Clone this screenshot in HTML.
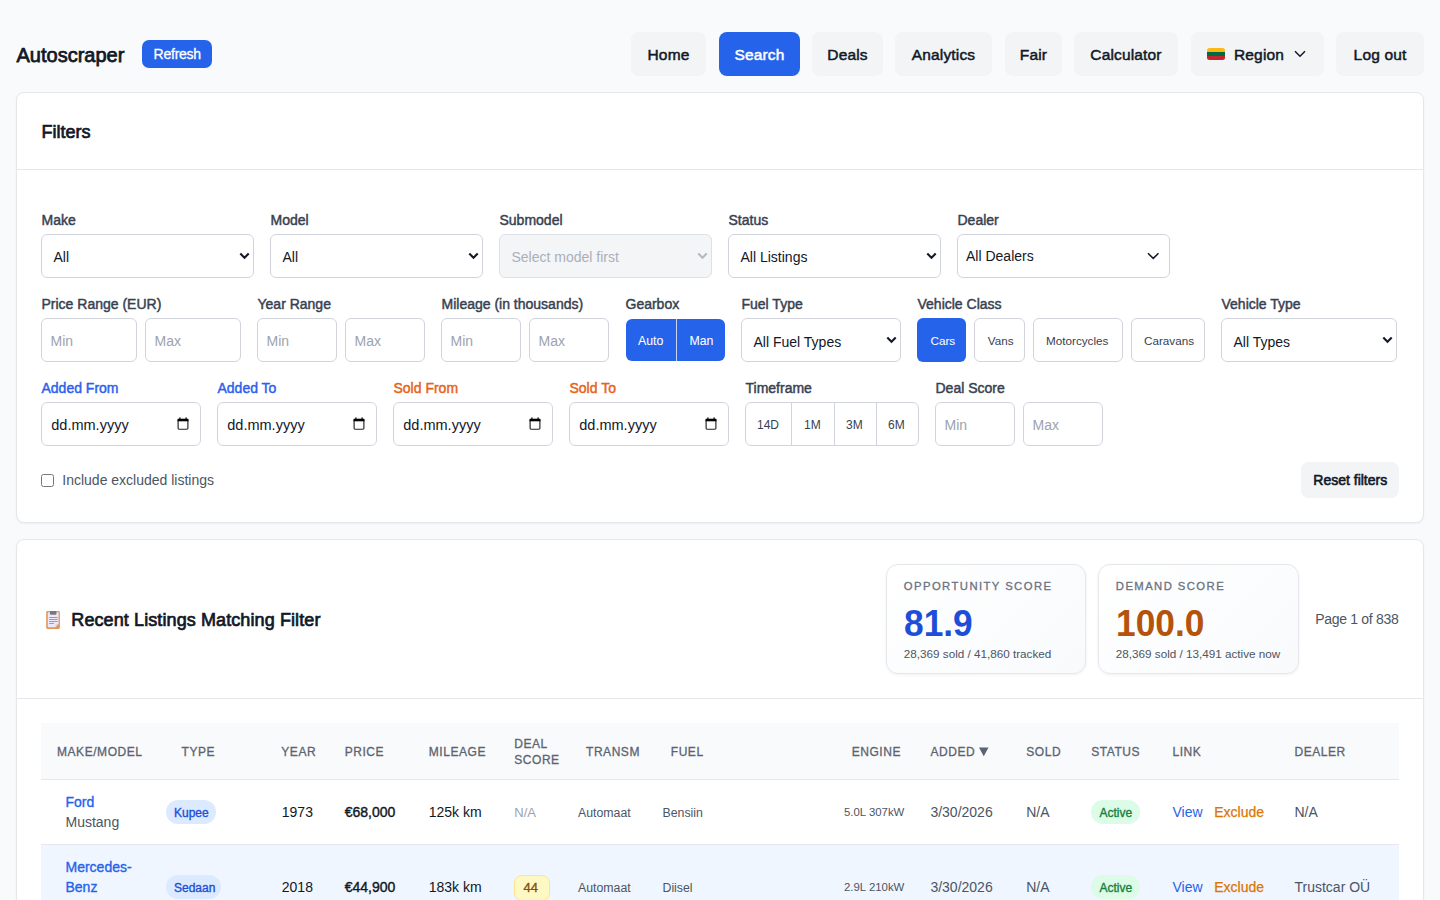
<!DOCTYPE html>
<html><head><meta charset="utf-8"><title>Autoscraper</title>
<style>
*{box-sizing:border-box;margin:0;padding:0}
html,body{width:1440px;height:900px;overflow:hidden}
body{background:#f8fafc;font-family:"Liberation Sans",sans-serif;color:#111827;position:relative}
.a{position:absolute;white-space:nowrap;line-height:1}
</style></head><body>
<div class="a" style="left:16.5px;top:44.77px;font-size:20px;color:#111827;-webkit-text-stroke-width:0.75px">Autoscraper</div>
<div style="position:absolute;left:142px;top:40px;width:70px;height:28px;background:#2563eb;border-radius:7px"></div>
<div class="a" style="left:153.6px;top:47.05px;font-size:14px;color:#ffffff;-webkit-text-stroke-width:0.3px;letter-spacing:-0.25px">Refresh</div>
<div style="position:absolute;left:631px;top:32px;width:75px;height:44px;background:#f3f4f6;border-radius:8px"></div>
<div class="a" style="left:631px;top:46.98px;width:75px;text-align:center;font-size:15.5px;letter-spacing:0.15px;color:#111827;-webkit-text-stroke-width:0.5px">Home</div>
<div style="position:absolute;left:719px;top:32px;width:81px;height:44px;background:#2563eb;border-radius:8px"></div>
<div class="a" style="left:719px;top:46.98px;width:81px;text-align:center;font-size:15.5px;letter-spacing:0.15px;color:#fff;-webkit-text-stroke-width:0.5px">Search</div>
<div style="position:absolute;left:812px;top:32px;width:71px;height:44px;background:#f3f4f6;border-radius:8px"></div>
<div class="a" style="left:812px;top:46.98px;width:71px;text-align:center;font-size:15.5px;letter-spacing:0.15px;color:#111827;-webkit-text-stroke-width:0.5px">Deals</div>
<div style="position:absolute;left:895px;top:32px;width:97px;height:44px;background:#f3f4f6;border-radius:8px"></div>
<div class="a" style="left:895px;top:46.98px;width:97px;text-align:center;font-size:15.5px;letter-spacing:0.15px;color:#111827;-webkit-text-stroke-width:0.5px">Analytics</div>
<div style="position:absolute;left:1005px;top:32px;width:57px;height:44px;background:#f3f4f6;border-radius:8px"></div>
<div class="a" style="left:1005px;top:46.98px;width:57px;text-align:center;font-size:15.5px;letter-spacing:0.15px;color:#111827;-webkit-text-stroke-width:0.5px">Fair</div>
<div style="position:absolute;left:1074px;top:32px;width:104px;height:44px;background:#f3f4f6;border-radius:8px"></div>
<div class="a" style="left:1074px;top:46.98px;width:104px;text-align:center;font-size:15.5px;letter-spacing:0.15px;color:#111827;-webkit-text-stroke-width:0.5px">Calculator</div>
<div style="position:absolute;left:1336px;top:32px;width:88px;height:44px;background:#f3f4f6;border-radius:8px"></div>
<div class="a" style="left:1336px;top:46.98px;width:88px;text-align:center;font-size:15.5px;letter-spacing:0.15px;color:#111827;-webkit-text-stroke-width:0.5px">Log out</div>
<div style="position:absolute;left:1191px;top:32px;width:133px;height:44px;background:#f3f4f6;border-radius:8px"></div>
<div style="position:absolute;left:1206.5px;top:48px;width:18.5px;height:12px;border-radius:2.5px;overflow:hidden"><div style="height:4px;background:#fdb913"></div><div style="height:4px;background:#006a44"></div><div style="height:4px;background:#c1272d"></div></div>
<div class="a" style="left:1234px;top:46.98px;font-size:15.5px;color:#111827;-webkit-text-stroke-width:0.5px;letter-spacing:0.15px">Region</div>
<svg style="position:absolute;left:1294px;top:50px" width="12" height="8" viewBox="0 0 12 8"><path d="M1 1.3 L6 6.3 L11 1.3" fill="none" stroke="#111827" stroke-width="1.5"/></svg>
<div style="position:absolute;left:16px;top:92px;width:1408px;height:431px;background:#fff;border:1px solid #e5e7eb;border-radius:8px;box-shadow:0 1px 2px rgba(16,24,40,.05)"></div>
<div class="a" style="left:41.5px;top:123.06px;font-size:18px;color:#111827;-webkit-text-stroke-width:0.7px">Filters</div>
<div style="position:absolute;left:17px;top:169px;width:1406px;height:1px;background:#e5e7eb"></div>
<div class="a" style="left:41.5px;top:213.15px;font-size:14px;color:#374151;-webkit-text-stroke-width:0.45px">Make</div>
<div style="position:absolute;left:41px;top:234px;width:213px;height:44px;background:#fff;border:1px solid #d1d5db;border-radius:6px"></div>
<div class="a" style="left:53.5px;top:250.15px;font-size:14px;color:#111827">All</div>
<svg style="position:absolute;left:239px;top:251.7px" width="11" height="8" viewBox="0 0 11 8"><path d="M1.3 1.6 L5.5 5.8 L9.7 1.6" fill="none" stroke="#111827" stroke-width="2.1"/></svg>
<div class="a" style="left:270.5px;top:213.15px;font-size:14px;color:#374151;-webkit-text-stroke-width:0.45px">Model</div>
<div style="position:absolute;left:270px;top:234px;width:213px;height:44px;background:#fff;border:1px solid #d1d5db;border-radius:6px"></div>
<div class="a" style="left:282.5px;top:250.15px;font-size:14px;color:#111827">All</div>
<svg style="position:absolute;left:468px;top:251.7px" width="11" height="8" viewBox="0 0 11 8"><path d="M1.3 1.6 L5.5 5.8 L9.7 1.6" fill="none" stroke="#111827" stroke-width="2.1"/></svg>
<div class="a" style="left:499.5px;top:213.15px;font-size:14px;color:#374151;-webkit-text-stroke-width:0.45px">Submodel</div>
<div style="position:absolute;left:499px;top:234px;width:213px;height:44px;background:#f4f5f7;border:1px solid #dde0e6;border-radius:6px"></div>
<div class="a" style="left:511.5px;top:250.15px;font-size:14px;color:#aab0bb">Select model first</div>
<svg style="position:absolute;left:697px;top:251.7px" width="11" height="8" viewBox="0 0 11 8"><path d="M1.3 1.6 L5.5 5.8 L9.7 1.6" fill="none" stroke="#b3b9c3" stroke-width="2.1"/></svg>
<div class="a" style="left:728.5px;top:213.15px;font-size:14px;color:#374151;-webkit-text-stroke-width:0.45px">Status</div>
<div style="position:absolute;left:728px;top:234px;width:213px;height:44px;background:#fff;border:1px solid #d1d5db;border-radius:6px"></div>
<div class="a" style="left:740.5px;top:250.15px;font-size:14px;color:#111827">All Listings</div>
<svg style="position:absolute;left:926px;top:251.7px" width="11" height="8" viewBox="0 0 11 8"><path d="M1.3 1.6 L5.5 5.8 L9.7 1.6" fill="none" stroke="#111827" stroke-width="2.1"/></svg>
<div class="a" style="left:957.5px;top:213.15px;font-size:14px;color:#374151;-webkit-text-stroke-width:0.45px">Dealer</div>
<div style="position:absolute;left:957px;top:234px;width:213px;height:44px;background:#fff;border:1px solid #d1d5db;border-radius:6px"></div>
<div class="a" style="left:966px;top:248.95px;font-size:14px;color:#111827">All Dealers</div>
<svg style="position:absolute;left:1146.5px;top:251.5px" width="12.5" height="8" viewBox="0 0 12.5 8"><path d="M1 1.3 L6.25 6.4 L11.5 1.3" fill="none" stroke="#111827" stroke-width="1.5"/></svg>
<div class="a" style="left:41.5px;top:297.05px;font-size:14px;color:#374151;-webkit-text-stroke-width:0.45px">Price Range (EUR)</div>
<div style="position:absolute;left:41px;top:318px;width:96px;height:44px;background:#fff;border:1px solid #d1d5db;border-radius:6px"></div>
<div class="a" style="left:50.5px;top:334.15px;font-size:14px;color:#9ca3af">Min</div>
<div style="position:absolute;left:145px;top:318px;width:96px;height:44px;background:#fff;border:1px solid #d1d5db;border-radius:6px"></div>
<div class="a" style="left:154.5px;top:334.15px;font-size:14px;color:#9ca3af">Max</div>
<div class="a" style="left:257.5px;top:297.05px;font-size:14px;color:#374151;-webkit-text-stroke-width:0.45px">Year Range</div>
<div style="position:absolute;left:257px;top:318px;width:80px;height:44px;background:#fff;border:1px solid #d1d5db;border-radius:6px"></div>
<div class="a" style="left:266.5px;top:334.15px;font-size:14px;color:#9ca3af">Min</div>
<div style="position:absolute;left:345px;top:318px;width:80px;height:44px;background:#fff;border:1px solid #d1d5db;border-radius:6px"></div>
<div class="a" style="left:354.5px;top:334.15px;font-size:14px;color:#9ca3af">Max</div>
<div class="a" style="left:441.5px;top:297.05px;font-size:14px;color:#374151;-webkit-text-stroke-width:0.45px">Mileage (in thousands)</div>
<div style="position:absolute;left:441px;top:318px;width:80px;height:44px;background:#fff;border:1px solid #d1d5db;border-radius:6px"></div>
<div class="a" style="left:450.5px;top:334.15px;font-size:14px;color:#9ca3af">Min</div>
<div style="position:absolute;left:529px;top:318px;width:80px;height:44px;background:#fff;border:1px solid #d1d5db;border-radius:6px"></div>
<div class="a" style="left:538.5px;top:334.15px;font-size:14px;color:#9ca3af">Max</div>
<div class="a" style="left:625.5px;top:297.05px;font-size:14px;color:#374151;-webkit-text-stroke-width:0.45px">Gearbox</div>
<div style="position:absolute;left:625.5px;top:318.6px;width:99px;height:42.4px;background:#2563eb;border-radius:6px"></div>
<div style="position:absolute;left:676px;top:318.6px;width:1px;height:42.4px;background:#c9d6f2"></div>
<div class="a" style="left:638px;top:335.09px;font-size:12.3px;color:#fff;-webkit-text-stroke-width:0.05px">Auto</div>
<div class="a" style="left:689.5px;top:335.09px;font-size:12.3px;color:#fff;-webkit-text-stroke-width:0.05px">Man</div>
<div class="a" style="left:741.5px;top:297.05px;font-size:14px;color:#374151;-webkit-text-stroke-width:0.45px">Fuel Type</div>
<div style="position:absolute;left:741px;top:318px;width:160px;height:44px;background:#fff;border:1px solid #d1d5db;border-radius:6px"></div>
<div class="a" style="left:753.5px;top:334.65px;font-size:14px;color:#111827">All Fuel Types</div>
<svg style="position:absolute;left:886px;top:335.7px" width="11" height="8" viewBox="0 0 11 8"><path d="M1.3 1.6 L5.5 5.8 L9.7 1.6" fill="none" stroke="#111827" stroke-width="2.1"/></svg>
<div class="a" style="left:917.5px;top:297.05px;font-size:14px;color:#374151;-webkit-text-stroke-width:0.45px">Vehicle Class</div>
<div style="position:absolute;left:917px;top:318px;width:49px;height:44px;background:#2563eb;border-radius:6px"></div>
<div class="a" style="left:930.5px;top:335.10px;font-size:11.7px;color:#fff;-webkit-text-stroke-width:0.05px">Cars</div>
<div style="position:absolute;left:974px;top:318px;width:51px;height:44px;background:#fff;border:1px solid #d1d5db;border-radius:6px"></div>
<div class="a" style="left:987.8px;top:335.10px;font-size:11.7px;color:#374151">Vans</div>
<div style="position:absolute;left:1033px;top:318px;width:90px;height:44px;background:#fff;border:1px solid #d1d5db;border-radius:6px"></div>
<div class="a" style="left:1046px;top:335.10px;font-size:11.7px;color:#374151">Motorcycles</div>
<div style="position:absolute;left:1131px;top:318px;width:74px;height:44px;background:#fff;border:1px solid #d1d5db;border-radius:6px"></div>
<div class="a" style="left:1144px;top:335.10px;font-size:11.7px;color:#374151">Caravans</div>
<div class="a" style="left:1221.5px;top:297.05px;font-size:14px;color:#374151;-webkit-text-stroke-width:0.45px">Vehicle Type</div>
<div style="position:absolute;left:1221px;top:318px;width:176px;height:44px;background:#fff;border:1px solid #d1d5db;border-radius:6px"></div>
<div class="a" style="left:1233.5px;top:334.65px;font-size:14px;color:#111827">All Types</div>
<svg style="position:absolute;left:1382px;top:335.7px" width="11" height="8" viewBox="0 0 11 8"><path d="M1.3 1.6 L5.5 5.8 L9.7 1.6" fill="none" stroke="#111827" stroke-width="2.1"/></svg>
<div class="a" style="left:41.5px;top:381.25px;font-size:14px;color:#2c5fee;-webkit-text-stroke-width:0.45px">Added From</div>
<div style="position:absolute;left:41px;top:402px;width:160px;height:44px;background:#fff;border:1px solid #d1d5db;border-radius:6px"></div>
<div class="a" style="left:51.3px;top:417.73px;font-size:14.5px;color:#111827">dd.mm.yyyy</div>
<svg style="position:absolute;left:177px;top:417px" width="12" height="13" viewBox="0 0 12 13"><rect x="1.1" y="2.4" width="9.8" height="9.8" rx="0.9" fill="none" stroke="#222" stroke-width="1.15"/><rect x="0.6" y="1.9" width="10.8" height="2.4" fill="#000"/><rect x="2.3" y="0.4" width="1.2" height="2" fill="#000"/><rect x="8.5" y="0.4" width="1.2" height="2" fill="#000"/></svg>
<div class="a" style="left:217.5px;top:381.25px;font-size:14px;color:#2c5fee;-webkit-text-stroke-width:0.45px">Added To</div>
<div style="position:absolute;left:217px;top:402px;width:160px;height:44px;background:#fff;border:1px solid #d1d5db;border-radius:6px"></div>
<div class="a" style="left:227.3px;top:417.73px;font-size:14.5px;color:#111827">dd.mm.yyyy</div>
<svg style="position:absolute;left:353px;top:417px" width="12" height="13" viewBox="0 0 12 13"><rect x="1.1" y="2.4" width="9.8" height="9.8" rx="0.9" fill="none" stroke="#222" stroke-width="1.15"/><rect x="0.6" y="1.9" width="10.8" height="2.4" fill="#000"/><rect x="2.3" y="0.4" width="1.2" height="2" fill="#000"/><rect x="8.5" y="0.4" width="1.2" height="2" fill="#000"/></svg>
<div class="a" style="left:393.5px;top:381.25px;font-size:14px;color:#e8621a;-webkit-text-stroke-width:0.45px">Sold From</div>
<div style="position:absolute;left:393px;top:402px;width:160px;height:44px;background:#fff;border:1px solid #d1d5db;border-radius:6px"></div>
<div class="a" style="left:403.3px;top:417.73px;font-size:14.5px;color:#111827">dd.mm.yyyy</div>
<svg style="position:absolute;left:529px;top:417px" width="12" height="13" viewBox="0 0 12 13"><rect x="1.1" y="2.4" width="9.8" height="9.8" rx="0.9" fill="none" stroke="#222" stroke-width="1.15"/><rect x="0.6" y="1.9" width="10.8" height="2.4" fill="#000"/><rect x="2.3" y="0.4" width="1.2" height="2" fill="#000"/><rect x="8.5" y="0.4" width="1.2" height="2" fill="#000"/></svg>
<div class="a" style="left:569.5px;top:381.25px;font-size:14px;color:#e8621a;-webkit-text-stroke-width:0.45px">Sold To</div>
<div style="position:absolute;left:569px;top:402px;width:160px;height:44px;background:#fff;border:1px solid #d1d5db;border-radius:6px"></div>
<div class="a" style="left:579.3px;top:417.73px;font-size:14.5px;color:#111827">dd.mm.yyyy</div>
<svg style="position:absolute;left:705px;top:417px" width="12" height="13" viewBox="0 0 12 13"><rect x="1.1" y="2.4" width="9.8" height="9.8" rx="0.9" fill="none" stroke="#222" stroke-width="1.15"/><rect x="0.6" y="1.9" width="10.8" height="2.4" fill="#000"/><rect x="2.3" y="0.4" width="1.2" height="2" fill="#000"/><rect x="8.5" y="0.4" width="1.2" height="2" fill="#000"/></svg>
<div class="a" style="left:745.5px;top:381.25px;font-size:14px;color:#374151;-webkit-text-stroke-width:0.45px">Timeframe</div>
<div style="position:absolute;left:745px;top:402px;width:174px;height:44px;background:#fff;border:1px solid #d1d5db;border-radius:6px"></div>
<div style="position:absolute;left:791px;top:403px;width:1px;height:42px;background:#d1d5db"></div>
<div style="position:absolute;left:834px;top:403px;width:1px;height:42px;background:#d1d5db"></div>
<div style="position:absolute;left:876px;top:403px;width:1px;height:42px;background:#d1d5db"></div>
<div class="a" style="left:757px;top:418.84px;font-size:12px;color:#374151">14D</div>
<div class="a" style="left:804px;top:418.84px;font-size:12px;color:#374151">1M</div>
<div class="a" style="left:846px;top:418.84px;font-size:12px;color:#374151">3M</div>
<div class="a" style="left:888px;top:418.84px;font-size:12px;color:#374151">6M</div>
<div class="a" style="left:935.5px;top:381.25px;font-size:14px;color:#374151;-webkit-text-stroke-width:0.45px">Deal Score</div>
<div style="position:absolute;left:935px;top:402px;width:80px;height:44px;background:#fff;border:1px solid #d1d5db;border-radius:6px"></div>
<div class="a" style="left:944.5px;top:418.15px;font-size:14px;color:#9ca3af">Min</div>
<div style="position:absolute;left:1023px;top:402px;width:80px;height:44px;background:#fff;border:1px solid #d1d5db;border-radius:6px"></div>
<div class="a" style="left:1032.5px;top:418.15px;font-size:14px;color:#9ca3af">Max</div>
<div style="position:absolute;left:41px;top:474px;width:13px;height:13px;border:1px solid #767676;border-radius:2.5px;background:#fff"></div>
<div class="a" style="left:62.3px;top:473.35px;font-size:14px;color:#4b5563">Include excluded listings</div>
<div style="position:absolute;left:1301px;top:462px;width:98px;height:36px;background:#f3f4f6;border-radius:8px"></div>
<div class="a" style="left:1313.3px;top:473.15px;font-size:14px;color:#111827;-webkit-text-stroke-width:0.6px">Reset filters</div>
<div style="position:absolute;left:16px;top:539px;width:1408px;height:420px;background:#fff;border:1px solid #e5e7eb;border-radius:8px;box-shadow:0 1px 2px rgba(16,24,40,.05)"></div>
<svg style="position:absolute;left:46px;top:611px" width="14" height="18" viewBox="0 0 14 18"><rect x="0.2" y="0" width="13.7" height="17.9" rx="1.3" fill="#e3955a"/><path d="M1.8 1.3 L12.6 1.3 L12.6 12.8 L9.4 16.2 L1.8 16.2 Z" fill="#ece8f7"/><path d="M12.6 12.8 L9.4 16.2 L9.6 13.2 Z" fill="#d6d0e6"/><rect x="3.9" y="0" width="6.6" height="3.8" rx="1" fill="#77777f"/><g stroke="#8f8f9c" stroke-width="0.85"><line x1="3.2" y1="6.5" x2="11.7" y2="6.5"/><line x1="3.2" y1="8.5" x2="11.7" y2="8.5"/><line x1="3.2" y1="10.5" x2="11.7" y2="10.5"/><line x1="3.2" y1="12.5" x2="8" y2="12.5"/></g></svg>
<div class="a" style="left:71.3px;top:611.06px;font-size:18px;color:#111827;-webkit-text-stroke-width:0.7px;letter-spacing:0.1px">Recent Listings Matching Filter</div>
<div style="position:absolute;left:886px;top:564px;width:200px;height:110px;border:1px solid #e5e7eb;border-radius:12px;background:linear-gradient(135deg,#ffffff 0%,#f8fafc 100%);box-shadow:0 1px 3px rgba(16,24,40,.06)"></div>
<div class="a" style="left:903.8px;top:580.93px;font-size:11.3px;color:#6b7280;-webkit-text-stroke-width:0.3px;letter-spacing:1.42px">OPPORTUNITY SCORE</div>
<div class="a" style="left:904px;top:605.90px;font-size:36.5px;color:#1d4ed8;font-weight:700;transform:scaleX(0.968);transform-origin:0 0">81.9</div>
<div class="a" style="left:903.8px;top:647.60px;font-size:11.7px;color:#4b5563">28,369 sold / 41,860 tracked</div>
<div style="position:absolute;left:1098px;top:564px;width:201px;height:110px;border:1px solid #e5e7eb;border-radius:12px;background:linear-gradient(135deg,#ffffff 0%,#f8fafc 100%);box-shadow:0 1px 3px rgba(16,24,40,.06)"></div>
<div class="a" style="left:1115.8px;top:580.93px;font-size:11.3px;color:#6b7280;-webkit-text-stroke-width:0.3px;letter-spacing:1.42px">DEMAND SCORE</div>
<div class="a" style="left:1116px;top:605.90px;font-size:36.5px;color:#b45309;font-weight:700;transform:scaleX(0.968);transform-origin:0 0">100.0</div>
<div class="a" style="left:1115.8px;top:647.60px;font-size:11.7px;color:#4b5563">28,369 sold / 13,491 active now</div>
<div class="a" style="left:1315.2px;top:612.45px;font-size:14px;color:#4b5563;letter-spacing:-0.3px">Page 1 of 838</div>
<div style="position:absolute;left:17px;top:698px;width:1406px;height:1px;background:#e5e7eb"></div>
<div style="position:absolute;left:41px;top:723px;width:1358px;height:56px;background:#f9fafb"></div>
<div style="position:absolute;left:41px;top:779px;width:1358px;height:1px;background:#e5e7eb"></div>
<div class="a" style="left:57px;top:745.84px;font-size:12px;color:#5b6472;-webkit-text-stroke-width:0.3px;letter-spacing:0.55px">MAKE/MODEL</div>
<div class="a" style="left:181.6px;top:745.84px;font-size:12px;color:#5b6472;-webkit-text-stroke-width:0.3px;letter-spacing:0.55px">TYPE</div>
<div class="a" style="left:281.3px;top:745.84px;font-size:12px;color:#5b6472;-webkit-text-stroke-width:0.3px;letter-spacing:0.55px">YEAR</div>
<div class="a" style="left:344.7px;top:745.84px;font-size:12px;color:#5b6472;-webkit-text-stroke-width:0.3px;letter-spacing:0.55px">PRICE</div>
<div class="a" style="left:428.75px;top:745.84px;font-size:12px;color:#5b6472;-webkit-text-stroke-width:0.3px;letter-spacing:0.55px">MILEAGE</div>
<div class="a" style="left:586px;top:745.84px;font-size:12px;color:#5b6472;-webkit-text-stroke-width:0.3px;letter-spacing:0.55px">TRANSM</div>
<div class="a" style="left:670.75px;top:745.84px;font-size:12px;color:#5b6472;-webkit-text-stroke-width:0.3px;letter-spacing:0.55px">FUEL</div>
<div class="a" style="left:851.7px;top:745.84px;font-size:12px;color:#5b6472;-webkit-text-stroke-width:0.3px;letter-spacing:0.55px">ENGINE</div>
<div class="a" style="left:930.4px;top:745.84px;font-size:12px;color:#5b6472;-webkit-text-stroke-width:0.3px;letter-spacing:0.55px">ADDED</div>
<div class="a" style="left:1026.25px;top:745.84px;font-size:12px;color:#5b6472;-webkit-text-stroke-width:0.3px;letter-spacing:0.55px">SOLD</div>
<div class="a" style="left:1091.25px;top:745.84px;font-size:12px;color:#5b6472;-webkit-text-stroke-width:0.3px;letter-spacing:0.55px">STATUS</div>
<div class="a" style="left:1172.5px;top:745.84px;font-size:12px;color:#5b6472;-webkit-text-stroke-width:0.3px;letter-spacing:0.55px">LINK</div>
<div class="a" style="left:1294.5px;top:745.84px;font-size:12px;color:#5b6472;-webkit-text-stroke-width:0.3px;letter-spacing:0.55px">DEALER</div>
<svg style="position:absolute;left:979px;top:747px" width="9.5" height="9.5" viewBox="0 0 9.5 9.5"><path d="M0 0.6 L9.5 0.6 L4.75 9.2 Z" fill="#5b6472"/></svg>
<div class="a" style="left:514.25px;top:737.84px;font-size:12px;color:#5b6472;-webkit-text-stroke-width:0.3px;letter-spacing:0.55px">DEAL</div>
<div class="a" style="left:514.25px;top:753.84px;font-size:12px;color:#5b6472;-webkit-text-stroke-width:0.3px;letter-spacing:0.55px">SCORE</div>
<div style="position:absolute;left:41px;top:780px;width:1358px;height:64px;background:#fff"></div>
<div style="position:absolute;left:41px;top:844px;width:1358px;height:1px;background:#e5e7eb"></div>
<div style="position:absolute;left:41px;top:845px;width:1358px;height:60px;background:#eff6ff"></div>
<div class="a" style="left:65.5px;top:794.75px;font-size:14px;color:#2563eb;-webkit-text-stroke-width:0.35px">Ford</div>
<div class="a" style="left:65.5px;top:815.35px;font-size:14px;color:#4b5563">Mustang</div>
<div style="position:absolute;left:166px;top:800px;width:50px;height:24px;background:#dbeafe;border-radius:12px"></div>
<div class="a" style="left:174px;top:807.44px;font-size:12px;color:#1d4ed8;-webkit-text-stroke-width:0.35px">Kupee</div>
<div class="a" style="left:281.8px;top:805.15px;font-size:14px;color:#111827">1973</div>
<div class="a" style="left:344.7px;top:805.15px;font-size:14px;color:#111827;-webkit-text-stroke-width:0.4px">€68,000</div>
<div class="a" style="left:428.75px;top:805.15px;font-size:14px;color:#111827">125k km</div>
<div class="a" style="left:514.25px;top:806.00px;font-size:13px;color:#9ca3af">N/A</div>
<div class="a" style="left:578px;top:806.59px;font-size:12.3px;color:#4b5563">Automaat</div>
<div class="a" style="left:662.5px;top:806.59px;font-size:12.3px;color:#4b5563">Bensiin</div>
<div class="a" style="left:844px;top:807.35px;font-size:11.4px;color:#4b5563">5.0L 307kW</div>
<div class="a" style="left:930.4px;top:805.15px;font-size:14px;color:#4b5563">3/30/2026</div>
<div class="a" style="left:1026.25px;top:805.15px;font-size:14px;color:#4b5563">N/A</div>
<div style="position:absolute;left:1091px;top:800px;width:49px;height:24px;background:#dcfce7;border-radius:12px"></div>
<div class="a" style="left:1099.5px;top:807.44px;font-size:12px;color:#15803d;-webkit-text-stroke-width:0.35px">Active</div>
<div class="a" style="left:1172.5px;top:805.15px;font-size:14px;color:#2563eb">View</div>
<div class="a" style="left:1214.25px;top:805.15px;font-size:14px;color:#d97706;-webkit-text-stroke-width:0.25px">Exclude</div>
<div class="a" style="left:1294.5px;top:805.15px;font-size:14px;color:#4b5563">N/A</div>
<div class="a" style="left:65.5px;top:860.15px;font-size:14px;color:#2563eb;-webkit-text-stroke-width:0.35px">Mercedes-</div>
<div class="a" style="left:65.5px;top:879.85px;font-size:14px;color:#2563eb;-webkit-text-stroke-width:0.35px">Benz</div>
<div style="position:absolute;left:166px;top:875px;width:55px;height:24px;background:#dbeafe;border-radius:12px"></div>
<div class="a" style="left:174px;top:882.44px;font-size:12px;color:#1d4ed8;-webkit-text-stroke-width:0.35px">Sedaan</div>
<div class="a" style="left:281.8px;top:880.15px;font-size:14px;color:#111827">2018</div>
<div class="a" style="left:344.7px;top:880.15px;font-size:14px;color:#111827;-webkit-text-stroke-width:0.4px">€44,900</div>
<div class="a" style="left:428.75px;top:880.15px;font-size:14px;color:#111827">183k km</div>
<div style="position:absolute;left:514px;top:874.5px;width:36px;height:26px;background:#fef9c3;border-radius:8px;border:1px solid #fde68a"></div>
<div class="a" style="left:523.5px;top:881.00px;font-size:13px;color:#854d0e;-webkit-text-stroke-width:0.35px">44</div>
<div class="a" style="left:578px;top:881.59px;font-size:12.3px;color:#4b5563">Automaat</div>
<div class="a" style="left:662.5px;top:881.59px;font-size:12.3px;color:#4b5563">Diisel</div>
<div class="a" style="left:844px;top:882.35px;font-size:11.4px;color:#4b5563">2.9L 210kW</div>
<div class="a" style="left:930.4px;top:880.15px;font-size:14px;color:#4b5563">3/30/2026</div>
<div class="a" style="left:1026.25px;top:880.15px;font-size:14px;color:#4b5563">N/A</div>
<div style="position:absolute;left:1091px;top:875px;width:49px;height:24px;background:#dcfce7;border-radius:12px"></div>
<div class="a" style="left:1099.5px;top:882.44px;font-size:12px;color:#15803d;-webkit-text-stroke-width:0.35px">Active</div>
<div class="a" style="left:1172.5px;top:880.15px;font-size:14px;color:#2563eb">View</div>
<div class="a" style="left:1214.25px;top:880.15px;font-size:14px;color:#d97706;-webkit-text-stroke-width:0.25px">Exclude</div>
<div class="a" style="left:1294.5px;top:880.15px;font-size:14px;color:#4b5563">Trustcar OÜ</div>
</body></html>
